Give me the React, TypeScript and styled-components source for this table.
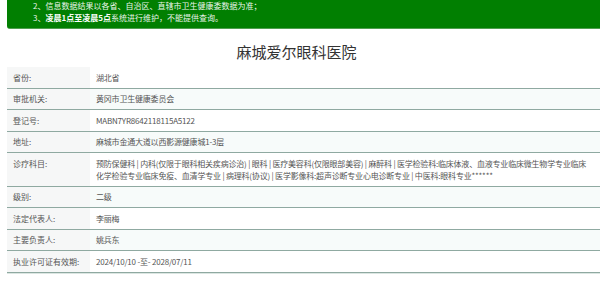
import React from "react";
import styled, { createGlobalStyle } from "styled-components";

const GlobalStyle = createGlobalStyle`
  html, body { margin: 0; padding: 0; background: #ffffff; }
  body {
    font-family: "Noto Sans CJK SC", "Noto Sans", "Liberation Sans", sans-serif;
    overflow: hidden;
  }
`;

const Page = styled.div`
  width: 600px;
  height: 289px;
  overflow: hidden;
  padding-left: 7px;
  box-sizing: border-box;
`;

const Notice = styled.div`
  background: #017f01;
  border-bottom: 1px solid #4f9f4f;
  border-bottom-left-radius: 3px;
  padding: 0 0 4px 26px;
  margin-right: -10px;
  color: #e9f4e9;
  font-size: 8px;
  line-height: 12px;
`;

const NoticeLine = styled.div`
  white-space: nowrap;
`;

const Strong = styled.b`
  color: #ffffff;
  font-weight: 700;
`;

const Title = styled.h1`
  margin: 13px 0 5px;
  text-align: center;
  font-size: 15px;
  line-height: 20px;
  font-weight: 400;
  color: #333333;
  padding-right: 14px;
`;

const Table = styled.div`
  display: flex;
  flex-direction: column;
`;

const Row = styled.div<{ $striped?: boolean }>`
  display: grid;
  grid-template-columns: 83px 1fr;
  border-bottom: 1px solid #8fa9a1;
  box-shadow: 0 1px 0 #dbe6e2;
  background: ${(p) => (p.$striped ? "#f7fbfa" : "#ffffff")};
  font-size: 8px;
  line-height: 12px;
  color: #555555;
`;

const Label = styled.div`
  background: #f6f7f7;
  padding: 4.5px 0 4px 6px;
  white-space: nowrap;
`;

const Value = styled.div`
  padding: 4.5px 8px 4px 6px;
  letter-spacing: -0.2px;
`;

const rows: { label: string; value: string }[] = [
  { label: "省份:", value: "湖北省" },
  { label: "审批机关:", value: "黄冈市卫生健康委员会" },
  { label: "登记号:", value: "MABN7YR8642118115A5122" },
  { label: "地址:", value: "麻城市金通大道以西影源健康城1-3层" },
  {
    label: "诊疗科目:",
    value:
      "预防保健科 | 内科(仅限于眼科相关疾病诊治) | 眼科 | 医疗美容科(仅限眼部美容) | 麻醉科 | 医学检验科:临床体液、血液专业临床微生物学专业临床化学检验专业临床免疫、血清学专业 | 病理科(协议) | 医学影像科:超声诊断专业心电诊断专业 | 中医科:眼科专业******",
  },
  { label: "级别:", value: "二级" },
  { label: "法定代表人:", value: "李丽梅" },
  { label: "主要负责人:", value: "姚兵东" },
  { label: "执业许可证有效期:", value: "2024/10/10 -至- 2028/07/11" },
];

export default function App() {
  return (
    <>
      <GlobalStyle />
      <Page>
        <Notice>
          <NoticeLine>2、信息数据结果以各省、自治区、直辖市卫生健康委数据为准；</NoticeLine>
          <NoticeLine>
            3、<Strong>凌晨1点至凌晨5点</Strong>系统进行维护，不能提供查询。
          </NoticeLine>
        </Notice>
        <Title>麻城爱尔眼科医院</Title>
        <Table>
          {rows.map((r, i) => (
            <Row key={r.label} $striped={i % 2 === 1}>
              <Label>{r.label}</Label>
              <Value>{r.value}</Value>
            </Row>
          ))}
        </Table>
      </Page>
    </>
  );
}
